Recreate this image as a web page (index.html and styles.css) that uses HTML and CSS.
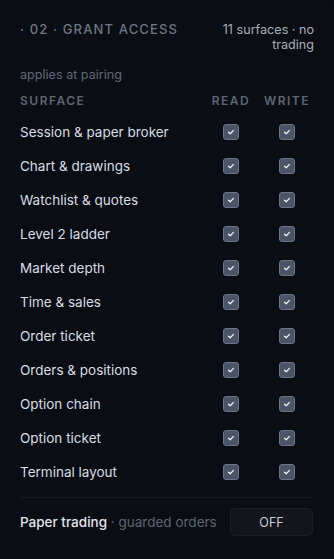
FILE: index.html
```html
<!DOCTYPE html>
<html>
<head>
<meta charset="utf-8">
<link rel="stylesheet" href="styles.css">
</head>
<body>
<div class="panel">
  <div class="head">
    <div class="title">· 02 · GRANT ACCESS</div>
    <div class="meta">11 surfaces · no trading</div>
  </div>
  <div class="sub">applies at pairing</div>
  <div class="grid cols">
    <div class="c-name">SURFACE</div>
    <div class="c-box">READ</div>
    <div class="c-box">WRITE</div>
  </div>
  <div class="rows">
    <div class="grid row"><div class="name">Session &amp; paper broker</div><div class="c-box"><span class="cb"><svg viewBox="0 0 16 16"><path d="M5.2 8.3l1.9 1.7 3.7-3.8"/></svg></span></div><div class="c-box"><span class="cb"><svg viewBox="0 0 16 16"><path d="M5.2 8.3l1.9 1.7 3.7-3.8"/></svg></span></div></div>
    <div class="grid row"><div class="name">Chart &amp; drawings</div><div class="c-box"><span class="cb"><svg viewBox="0 0 16 16"><path d="M5.2 8.3l1.9 1.7 3.7-3.8"/></svg></span></div><div class="c-box"><span class="cb"><svg viewBox="0 0 16 16"><path d="M5.2 8.3l1.9 1.7 3.7-3.8"/></svg></span></div></div>
    <div class="grid row"><div class="name">Watchlist &amp; quotes</div><div class="c-box"><span class="cb"><svg viewBox="0 0 16 16"><path d="M5.2 8.3l1.9 1.7 3.7-3.8"/></svg></span></div><div class="c-box"><span class="cb"><svg viewBox="0 0 16 16"><path d="M5.2 8.3l1.9 1.7 3.7-3.8"/></svg></span></div></div>
    <div class="grid row"><div class="name">Level 2 ladder</div><div class="c-box"><span class="cb"><svg viewBox="0 0 16 16"><path d="M5.2 8.3l1.9 1.7 3.7-3.8"/></svg></span></div><div class="c-box"><span class="cb"><svg viewBox="0 0 16 16"><path d="M5.2 8.3l1.9 1.7 3.7-3.8"/></svg></span></div></div>
    <div class="grid row"><div class="name">Market depth</div><div class="c-box"><span class="cb"><svg viewBox="0 0 16 16"><path d="M5.2 8.3l1.9 1.7 3.7-3.8"/></svg></span></div><div class="c-box"><span class="cb"><svg viewBox="0 0 16 16"><path d="M5.2 8.3l1.9 1.7 3.7-3.8"/></svg></span></div></div>
    <div class="grid row"><div class="name">Time &amp; sales</div><div class="c-box"><span class="cb"><svg viewBox="0 0 16 16"><path d="M5.2 8.3l1.9 1.7 3.7-3.8"/></svg></span></div><div class="c-box"><span class="cb"><svg viewBox="0 0 16 16"><path d="M5.2 8.3l1.9 1.7 3.7-3.8"/></svg></span></div></div>
    <div class="grid row"><div class="name">Order ticket</div><div class="c-box"><span class="cb"><svg viewBox="0 0 16 16"><path d="M5.2 8.3l1.9 1.7 3.7-3.8"/></svg></span></div><div class="c-box"><span class="cb"><svg viewBox="0 0 16 16"><path d="M5.2 8.3l1.9 1.7 3.7-3.8"/></svg></span></div></div>
    <div class="grid row"><div class="name">Orders &amp; positions</div><div class="c-box"><span class="cb"><svg viewBox="0 0 16 16"><path d="M5.2 8.3l1.9 1.7 3.7-3.8"/></svg></span></div><div class="c-box"><span class="cb"><svg viewBox="0 0 16 16"><path d="M5.2 8.3l1.9 1.7 3.7-3.8"/></svg></span></div></div>
    <div class="grid row"><div class="name">Option chain</div><div class="c-box"><span class="cb"><svg viewBox="0 0 16 16"><path d="M5.2 8.3l1.9 1.7 3.7-3.8"/></svg></span></div><div class="c-box"><span class="cb"><svg viewBox="0 0 16 16"><path d="M5.2 8.3l1.9 1.7 3.7-3.8"/></svg></span></div></div>
    <div class="grid row"><div class="name">Option ticket</div><div class="c-box"><span class="cb"><svg viewBox="0 0 16 16"><path d="M5.2 8.3l1.9 1.7 3.7-3.8"/></svg></span></div><div class="c-box"><span class="cb"><svg viewBox="0 0 16 16"><path d="M5.2 8.3l1.9 1.7 3.7-3.8"/></svg></span></div></div>
    <div class="grid row"><div class="name">Terminal layout</div><div class="c-box"><span class="cb"><svg viewBox="0 0 16 16"><path d="M5.2 8.3l1.9 1.7 3.7-3.8"/></svg></span></div><div class="c-box"><span class="cb"><svg viewBox="0 0 16 16"><path d="M5.2 8.3l1.9 1.7 3.7-3.8"/></svg></span></div></div>
  </div>
  <div class="divider"></div>
  <div class="foot">
    <div class="paper"><span class="strong">Paper trading</span><span class="muted"> · guarded orders</span></div>
    <button class="toggle">OFF</button>
  </div>
</div>
</body>
</html>
```
FILE: styles.css
```css
html, body {
  margin: 0;
  padding: 0;
  background: #0a0d14;
}
body {
  font-family: Inter, "Liberation Sans", sans-serif;
  font-size: 13.5px;
  color: #d5d9e0;
}
.panel {
  box-sizing: border-box;
  width: 334px;
  height: 559px;
  padding: 22px 20px 0 20px;
  background: #0a0d14;
  border-radius: 8px;
}
.head {
  display: flex;
  justify-content: space-between;
  align-items: flex-start;
}
.title {
  font-size: 13px;
  line-height: 15px;
  letter-spacing: 1.15px;
  color: #6f7682;
  font-weight: 500;
}
.meta {
  width: 100px;
  text-align: right;
  font-size: 12.6px;
  line-height: 15px;
  color: #a8adb7;
}
.sub {
  margin-top: 15px;
  line-height: 16px;
  font-size: 12.6px;
  color: #626976;
}
.grid {
  display: grid;
  grid-template-columns: 1fr 56px 56px;
  align-items: center;
}
.cols {
  margin-top: 10px;
  line-height: 16px;
  font-size: 12px;
  letter-spacing: 1.5px;
  font-weight: 600;
  color: #5f6673;
}
.c-box {
  display: flex;
  justify-content: center;
  padding-left: 2px;
}
.rows {
  margin-top: 6px;
}
.row {
  height: 34px;
}
.name {
  color: #d8dce3;
}
.cb {
  box-sizing: border-box;
  width: 16px;
  height: 16px;
  border-radius: 3px;
  background: #4b5467;
  border: 1px solid #6c7588;
  display: flex;
  align-items: center;
  justify-content: center;
}
.cb svg {
  width: 14px;
  height: 14px;
  fill: none;
  stroke: #f3f5f8;
  stroke-width: 1.4;
  stroke-linecap: round;
  stroke-linejoin: round;
}
.divider {
  margin-top: 8px;
  height: 1px;
  background: #161a22;
}
.foot {
  margin-top: 10px;
  display: flex;
  justify-content: space-between;
  align-items: center;
}
.strong {
  color: #e1e4ea;
  font-weight: 500;
}
.muted {
  color: #5e6572;
}
.toggle {
  width: 83px;
  height: 28px;
  margin-right: 1px;
  background: #12151c;
  border: 1px solid #1b1f27;
  border-radius: 5px;
  color: #c9cdd4;
  font-family: Inter, "Liberation Sans", sans-serif;
  font-size: 12.5px;
  padding: 0;
}
```
